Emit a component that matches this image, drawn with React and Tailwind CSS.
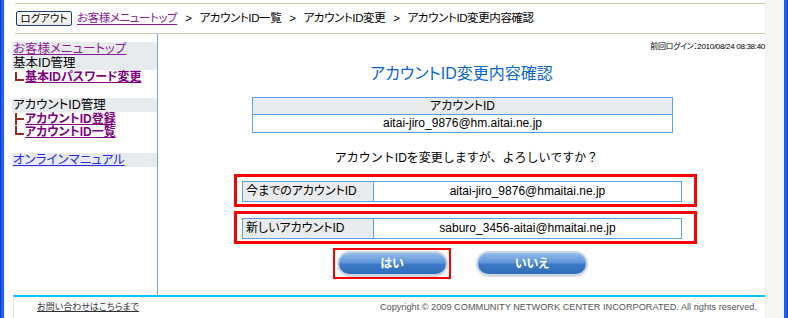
import React from "react";

const FONT = "font-['Liberation_Sans','Noto_Sans_CJK_JP',sans-serif] [font-feature-settings:'palt']";

function Tree({ type }) {
  return (
    <svg width="10" height="13" viewBox="0 0 10 13" className="shrink-0">
      {type === "L" ? (
        <>
          <rect x="1" y="1" width="2" height="9" fill="#9b2b22" />
          <rect x="1" y="8" width="9" height="2" fill="#9b2b22" />
        </>
      ) : (
        <>
          <rect x="1" y="1" width="2" height="12" fill="#9b2b22" />
          <rect x="1" y="6" width="9" height="2" fill="#9b2b22" />
        </>
      )}
    </svg>
  );
}

function Pill({ label, w }) {
  return (
    <div
      className={`${w} h-[25px] rounded-full border-2 border-[#cbd6e1] bg-[linear-gradient(to_bottom,#93bdea_0%,#5f96d8_45%,#3c7ac8_55%,#2f6cb8_100%)] flex items-center justify-center shadow-[0_1px_1px_rgba(0,0,0,0.15)]`}
    >
      <span className="text-white font-bold text-[12px] leading-none">{label}</span>
    </div>
  );
}

export default function App() {
  return (
    <div className={`w-[788px] h-[318px] flex overflow-hidden bg-white text-black ${FONT}`}>
      <div className="w-[4px] h-full bg-[linear-gradient(to_right,#0a2ec4,#2a6bf0,#1657e0)]" />
      <div className="w-[761px] h-full flex flex-col">
        {/* header */}
        <div className="pl-[11px] pt-[3px]">
          <div className="h-[31px] border-t border-b border-[#cdc6b2] flex items-center text-[11.5px] tracking-[-0.4px]">
            <div className="ml-[1px] w-[56px] h-[15px] border border-[#1c3f78] rounded-[2px] bg-[linear-gradient(to_bottom,#ffffff,#ecebe6)] flex items-center justify-center text-[10.5px] leading-none tracking-normal">
              ログアウト
            </div>
            <span className="ml-[5px] text-[#8a1a9a] underline underline-offset-2">お客様メニュートップ</span>
            <span className="mx-[8px]">&gt;</span>
            <span>アカウントID一覧</span>
            <span className="mx-[8px]">&gt;</span>
            <span>アカウントID変更</span>
            <span className="mx-[8px]">&gt;</span>
            <span>アカウントID変更内容確認</span>
          </div>
        </div>
        {/* body */}
        <div className="h-[261px] flex">
          <div className="ml-[8px] w-[146px] border-r border-[#6aa6ec] pt-[8px] text-[12.5px]">
            <div className="h-[14px] leading-[14px] bg-[#e8ebee] pl-[1px]">
              <span className="text-[#8a1a9a] underline">お客様メニュートップ</span>
            </div>
            <div className="h-[14px] leading-[14px] bg-[#e8ebee] pl-[1px]">基本ID管理</div>
            <div className="h-[14px] leading-[14px] flex items-center pl-[2px]">
              <Tree type="L" />
              <span className="ml-[1px] text-[12px] text-[#800080] font-bold underline">基本IDパスワード変更</span>
            </div>
            <div className="h-[14px]" />
            <div className="h-[14px] leading-[14px] bg-[#e8ebee] pl-[1px]">アカウントID管理</div>
            <div className="h-[13px] leading-[12px] flex items-center pl-[2px]">
              <Tree type="T" />
              <span className="ml-[1px] text-[12px] leading-[12px] text-[#800080] font-bold underline">アカウントID登録</span>
            </div>
            <div className="h-[13px] leading-[12px] flex items-center pl-[2px]">
              <Tree type="L" />
              <span className="ml-[1px] text-[12px] leading-[12px] text-[#800080] font-bold underline">アカウントID一覧</span>
            </div>
            <div className="h-[15px]" />
            <div className="h-[14px] leading-[14px] bg-[#e8ebee] pl-[1px]">
              <span className="text-[#2a2ae6] underline">オンラインマニュアル</span>
            </div>
          </div>
          <div className="w-[607px] flex flex-col">
            <div className="mt-[8px] h-[10px] leading-[10px] text-right text-[8px] tracking-[-0.3px]">
              前回ログイン：2010/08/24 08:38:40
            </div>
            <div className="mt-[12px] h-[20px] leading-[20px] text-center text-[16px] text-[#0a66d4]">
              アカウントID変更内容確認
            </div>
            <div className="mt-[13px] ml-[94px] w-[421px] border border-[#5aa2f2] text-[12px]">
              <div className="h-[17px] leading-[17px] bg-[#e9ebec] text-center border-b border-[#5aa2f2]">アカウントID</div>
              <div className="h-[17px] leading-[17px] text-center">aitai-jiro_9876@hm.aitai.ne.jp</div>
            </div>
            <div className="mt-[17px] h-[16px] leading-[16px] text-center text-[12px] [font-feature-settings:normal] pl-[10px]">
              アカウントIDを変更しますが、よろしいですか？
            </div>
            {[
              ["今までのアカウントID", "aitai-jiro_9876@hmaitai.ne.jp"],
              ["新しいアカウントID", "saburo_3456-aitai@hmaitai.ne.jp"],
            ].map(([k, v], i) => (
              <div
                key={i}
                className={`${i === 0 ? "mt-[8px]" : "mt-[4px]"} ml-[76px] w-[463px] h-[33px] border-[3px] border-[#ff0000] pl-[5px] pt-[4px]`}
              >
                <div className="w-[440px] h-[21px] border border-[#5aa2f2] flex text-[12px]">
                  <div className="w-[131px] bg-[#e9ebec] border-r border-[#5aa2f2] pl-[3px] leading-[19px]">{k}</div>
                  <div className="flex-1 text-center leading-[19px]">{v}</div>
                </div>
              </div>
            ))}
            <div className="mt-[4px] ml-[175px] flex items-start">
              <div className="w-[118px] h-[31px] border-2 border-[#ff0000] flex items-center justify-center">
                <Pill label="はい" w="w-[111px]" />
              </div>
              <div className="ml-[25px] mt-[3px]">
                <Pill label="いいえ" w="w-[112px]" />
              </div>
            </div>
          </div>
        </div>
        {/* footer */}
        <div className="ml-[9px] h-[23px] border-t-2 border-[#00c0ff] border-l border-l-[#e4e4e4] flex items-center justify-between">
          <span className="ml-[23px] text-[9px] text-[#333] underline">お問い合わせはこちらまで</span>
          <span className="mr-[8px] text-[9.2px] text-[#555] font-['Liberation_Sans',sans-serif]">
            Copyright © 2009 COMMUNITY NETWORK CENTER INCORPORATED. All rights reserved.
          </span>
        </div>
      </div>
      <div className="w-[19px] h-full bg-[#f7f7f4] border-l border-[#f0f0ea]" />
      <div className="w-[4px] h-full bg-[linear-gradient(to_right,#1657e0,#2a6bf0,#0a2ec4)]" />
    </div>
  );
}
